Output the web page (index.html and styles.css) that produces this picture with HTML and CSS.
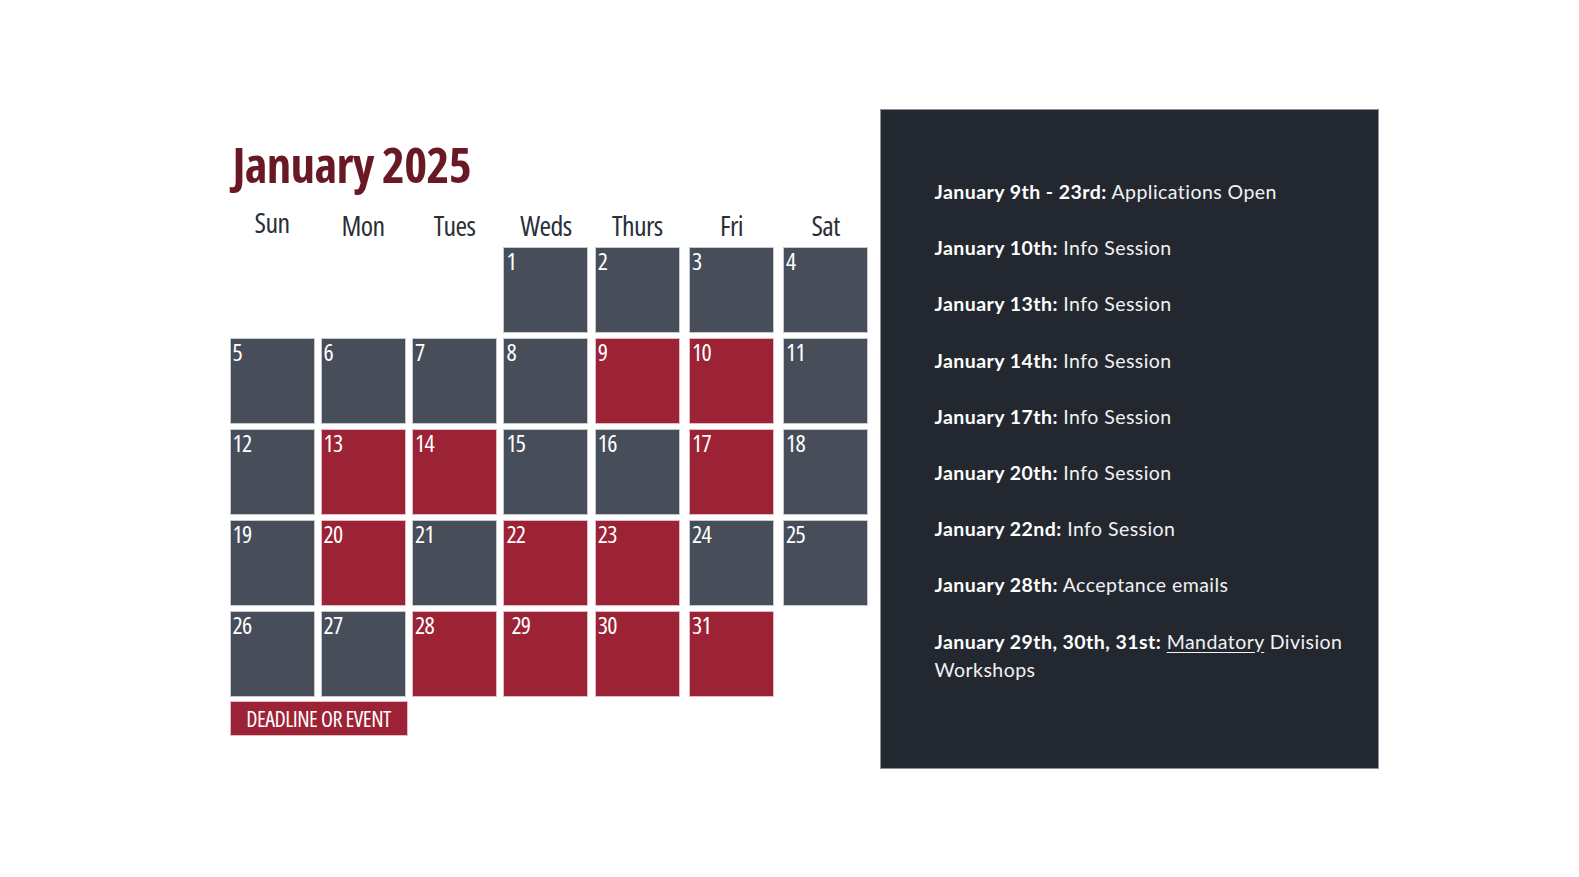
FILE: index.html
```html
<!DOCTYPE html>
<html lang="en">
<head>
<meta charset="utf-8">
<title>January 2025</title>
<link rel="stylesheet" href="styles.css">
</head>
<body>
<main class="page">
  <section class="calendar">
    <h1 class="title">January 2025</h1>
    <div class="weekdays">
      <span class="sun">Sun</span><span>Mon</span><span>Tues</span><span>Weds</span><span>Thurs</span><span>Fri</span><span>Sat</span>
    </div>
    <div class="grid">
      <div class="empty"></div><div class="empty"></div><div class="empty"></div>
      <div class="day">1</div><div class="day">2</div><div class="day">3</div><div class="day">4</div>
      <div class="day">5</div><div class="day">6</div><div class="day">7</div><div class="day">8</div><div class="day event">9</div><div class="day event">10</div><div class="day">11</div>
      <div class="day">12</div><div class="day event">13</div><div class="day event">14</div><div class="day">15</div><div class="day">16</div><div class="day event">17</div><div class="day">18</div>
      <div class="day">19</div><div class="day event">20</div><div class="day">21</div><div class="day event">22</div><div class="day event">23</div><div class="day">24</div><div class="day">25</div>
      <div class="day">26</div><div class="day">27</div><div class="day event">28</div><div class="day event indent">29</div><div class="day event">30</div><div class="day event">31</div>
    </div>
    <div class="legend">DEADLINE OR EVENT</div>
  </section>
  <aside class="panel">
    <p><b>January 9th - 23rd:</b> Applications Open</p>
    <p><b>January 10th:</b> Info Session</p>
    <p><b>January 13th:</b> Info Session</p>
    <p><b>January 14th:</b> Info Session</p>
    <p><b>January 17th:</b> Info Session</p>
    <p><b>January 20th:</b> Info Session</p>
    <p><b>January 22nd:</b> Info Session</p>
    <p><b>January 28th:</b> Acceptance emails</p>
    <p><b>January 29th, 30th, 31st:</b> <u>Mandatory</u> Division Workshops</p>
  </aside>
</main>
</body>
</html>
```
FILE: styles.css
```css
* { box-sizing: border-box; }
html, body { margin: 0; padding: 0; background: #ffffff; }
body { width: 1579px; height: 877px; overflow: hidden; }

.page {
  display: flex;
  align-items: flex-start;
  gap: 12px;
  padding: 109px 0 0 230.5px;
}

.calendar {
  width: 637px;
  padding-top: 30.5px;
  font-family: "Open Sans", "Roboto Condensed", sans-serif;
  font-stretch: 75%;
}

.title {
  margin: 0 0 0 2px;
  font-size: 49px;
  line-height: 49px;
  font-weight: 700;
  letter-spacing: -0.7px;
  color: #681924;
}

/* column tracks follow the uneven spacing of the original layout */
.weekdays,
.grid {
  display: grid;
  grid-template-columns: 91px 91.5px 91.4px 91.4px 94.3px 94px 83.5px;
  justify-items: start;
}

.weekdays {
  margin-top: 22.6px;
  font-size: 28px;
  line-height: 28px;
  font-weight: 500;
  letter-spacing: -0.6px;
  color: #2a2f37;
}

.weekdays span { width: 83px; text-align: center; }
.weekdays .sun { margin-top: -3px; }

.grid {
  grid-auto-rows: 84px;
  row-gap: 7px;
  margin-top: 8.5px;
}

.day {
  width: 83px;
  height: 84px;
  background: #474e59;
  box-shadow: 0 0 0 1px rgba(71, 78, 89, 0.3);
  color: #ffffff;
  font-size: 24px;
  line-height: 24px;
  font-weight: 400;
  letter-spacing: -0.8px;
  padding: 1px 2px 0;
}

.day.event {
  background: #9c2235;
  box-shadow: 0 0 0 1px rgba(156, 34, 53, 0.3);
}

.day.indent { padding-left: 7px; }

.legend {
  margin-top: 6.6px;
  width: 176px;
  height: 33px;
  line-height: 33px;
  background: #9c2235;
  box-shadow: 0 0 0 1px rgba(156, 34, 53, 0.3);
  color: #ffffff;
  text-align: center;
  font-size: 22px;
  font-weight: 400;
  letter-spacing: -0.5px;
}

.panel {
  width: 499px;
  height: 660px;
  background: #232830;
  border: 1px solid #8d9197;
  padding: 68px 20px 0 54px;
  font-family: Lato, "Open Sans", sans-serif;
  font-size: 19.5px;
  letter-spacing: 0.45px;
  line-height: 28px;
  color: #f2f2f2;
}

.panel p { margin: 0 0 28.2px; }
.panel b { font-weight: 700; color: #ffffff; }
.panel u { text-underline-offset: 3px; }
```
